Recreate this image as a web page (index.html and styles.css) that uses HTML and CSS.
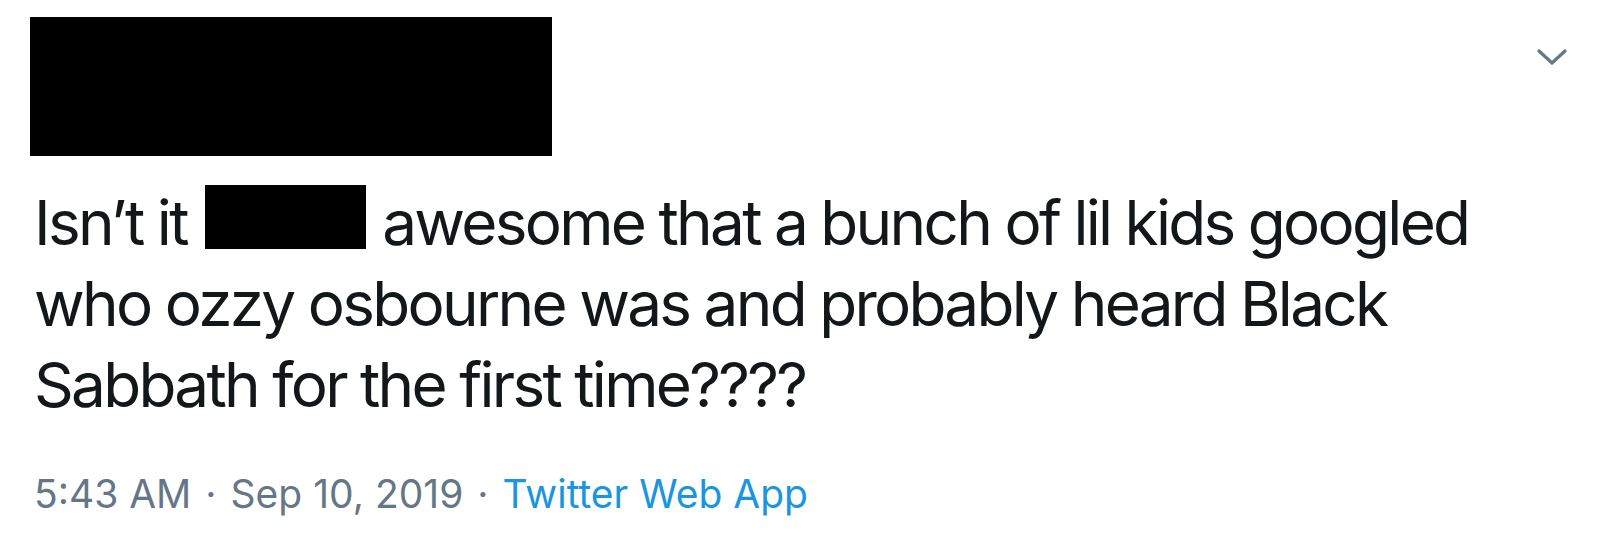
FILE: index.html
```html
<!DOCTYPE html>
<html>
<head>
<meta charset="utf-8">
<link rel="stylesheet" href="styles.css">
</head>
<body>
<article class="tweet">
  <header class="tweet-header">
    <div class="redacted-author"></div>
    <button class="caret" aria-label="More">
      <svg viewBox="0 0 30 16" width="30" height="16"><polyline points="2,2 15,14 28,2" fill="none" stroke="#657786" stroke-width="3.2" stroke-linecap="round" stroke-linejoin="round"/></svg>
    </button>
  </header>
  <div class="tweet-text">Isn’t it <span class="redacted-word"></span> awesome that a bunch of lil kids googled who ozzy osbourne was and probably heard Black Sabbath for the first time????</div>
  <div class="tweet-meta"><span class="muted">5:43 AM</span><span class="dot">·</span><span class="muted">Sep 10, 2019</span><span class="dot">·</span><a class="source" href="#">Twitter Web App</a></div>
</article>
</body>
</html>
```
FILE: styles.css
```css
html, body {
  margin: 0;
  padding: 0;
  background: #ffffff;
}
body {
  font-family: Inter, "Liberation Sans", Arial, sans-serif;
  color: #14171a;
}
.tweet {
  width: 1600px;
  height: 547px;
  box-sizing: border-box;
  padding: 17px 0 0 30px;
}
.tweet-header {
  display: flex;
  justify-content: space-between;
  align-items: flex-start;
}
.redacted-author {
  width: 522px;
  height: 139px;
  background: #000;
}
.caret {
  border: 0;
  background: none;
  padding: 0;
  margin: 32px 33px 0 0;
  width: 30px;
  height: 16px;
  display: block;
}
.caret svg { display: block; }
.tweet-text {
  margin-top: 26px;
  padding-left: 4px;
  width: 1500px;
  font-size: 62px;
  line-height: 81px;
  letter-spacing: -2.7px;
  word-spacing: -0.5px;
}
.redacted-word {
  display: inline-block;
  width: 161px;
  height: 64px;
  background: #000;
  vertical-align: -4px;
  margin-left: 4px;
  margin-right: 2px;
}
.tweet-meta {
  margin-top: 43px;
  padding-left: 4px;
  font-size: 39px;
  line-height: 51px;
  color: #657786;
}
.muted { color: #657786; }
.dot {
  color: #657786;
  margin: 0 14px;
}
.source {
  color: #1b95e0;
  text-decoration: none;
}
```
